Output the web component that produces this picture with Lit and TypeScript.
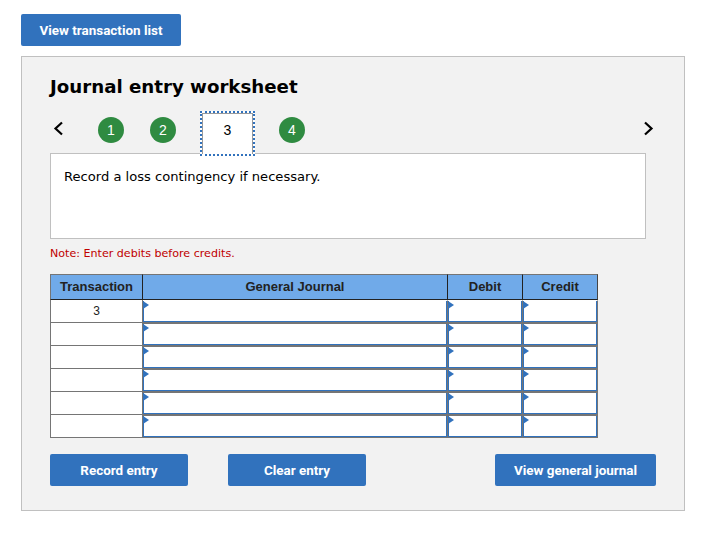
import {LitElement, html, css} from 'lit';
import {customElement} from 'lit/decorators.js';

const TABS = [1, 2, 3, 4];
const ROWS = ['3', '', '', '', '', ''];

@customElement('app-root')
export class AppRoot extends LitElement {
  static styles = css`
    :host {
      display: block;
      width: 701px;
      height: 543px;
      background: #fff;
      box-sizing: border-box;
      padding: 14px 16px 0 21px;
      font-family: 'DejaVu Sans', Verdana, sans-serif;
      color: #000;
    }

    .btn {
      display: flex;
      align-items: center;
      justify-content: center;
      height: 32px;
      border: 0;
      padding: 0;
      border-radius: 2px;
      background: #3172bd;
      color: #fff;
      font-family: Roboto, 'Liberation Sans', sans-serif;
      font-weight: 700;
      font-size: 13.45px;
    }

    .btn-list { width: 160px; margin-bottom: 10px; }
    .btn-action { width: 138px; }
    .btn-journal { width: 161px; margin-left: auto; }

    .panel {
      width: 664px;
      height: 455px;
      box-sizing: border-box;
      border: 1px solid #c0c0c0;
      background: #f2f2f2;
      padding: 17px 28px 0;
    }

    h2 {
      margin: 0 0 11px;
      font-size: 18.2px;
      line-height: 26px;
      font-weight: 700;
    }

    .tabs {
      position: relative;
      z-index: 1;
      display: flex;
      align-items: center;
      height: 45px;
      margin-bottom: -3px;
    }

    .arrow { width: 11px; height: 15px; display: block; }
    .prev { margin: 0 0 10px 3px; }
    .next { margin: 0 2px 10px auto; }

    .tab-list {
      display: flex;
      align-items: center;
      margin-left: 34px;
    }

    .step {
      width: 26px;
      height: 26px;
      margin: 0 26px 7px 0;
      border-radius: 50%;
      background: #2f8b41;
      color: #fff;
      display: flex;
      align-items: center;
      justify-content: center;
      font-family: 'Liberation Sans', Arial, sans-serif;
      font-size: 14px;
    }

    .step.current {
      width: 51px;
      height: 34px;
      padding-bottom: 7px;
      margin: 0 24px 0 0;
      border-radius: 0;
      border: 2px dotted #3172bd;
      background: #fff;
      color: #000;
      box-shadow: inset 1px 1px #9a9a9a, inset -1px 0 #9a9a9a;
    }

    .step:nth-child(2) { margin-right: 24px; }

    .desc {
      width: 596px;
      height: 86px;
      box-sizing: border-box;
      border: 1px solid #c0c0c0;
      background: #fff;
      padding: 14px 13px 0;
      font-size: 13.1px;
      line-height: 17px;
    }

    .note {
      margin: 7px 0 13px;
      color: #c00000;
      font-size: 11.1px;
      line-height: 15px;
    }

    .grid {
      display: grid;
      grid-template-columns: 93px 305px 75px 75px;
      width: 548px;
      box-sizing: border-box;
      font-family: 'Liberation Sans', Arial, sans-serif;
      font-size: 13px;
    }

    .head {
      height: 26px;
      box-sizing: border-box;
      padding-bottom: 2px;
      background: #70aae9;
      border-top: 1px solid #757575;
      border-right: 1px solid #222;
      border-bottom: 1px solid #222;
      color: #222;
      font-weight: 700;
      display: flex;
      align-items: center;
      justify-content: center;
    }

    .head:first-child { border-left: 1px solid #757575; }
    .head:nth-child(4) { border-right-color: #444; }

    .label {
      height: 23px;
      box-sizing: border-box;
      background: #fff;
      border-left: 1px solid #757575;
      border-right: 1px solid #757575;
      border-bottom: 1px solid #757575;
      display: flex;
      align-items: center;
      justify-content: center;
      color: #222;
      font-size: 12px;
    }

    .cell {
      position: relative;
      height: 23px;
      box-sizing: border-box;
      background: #fff;
      border-top: 1px solid #757575;
      border-right: 1px solid #757575;
      border-bottom: 1px solid #757575;
      box-shadow: inset 0 -1px #3172bd, inset 1px 0 #3172bd, inset -1px 0 #3172bd;
    }

    .cell.first { border-top-color: #fff; }

    .cell::before {
      content: '';
      position: absolute;
      left: 0;
      top: 0;
      border-left: 6px solid #3172bd;
      border-top: 4px solid transparent;
      border-bottom: 4px solid transparent;
    }

    .actions {
      display: flex;
      gap: 40px;
      margin-top: 16px;
    }
  `;

  render() {
    return html`
      <button class="btn btn-list">View transaction list</button>
      <div class="panel">
        <h2>Journal entry worksheet</h2>
        <div class="tabs">
          <svg class="arrow prev" viewBox="0 0 11 15">
            <path d="M9 1.5 L2.5 7.5 L9 13.5" fill="none" stroke="#000" stroke-width="2.2"/>
          </svg>
          <div class="tab-list">
            ${TABS.map(
              (n) => html`<div class="step ${n === 3 ? 'current' : ''}">${n}</div>`
            )}
          </div>
          <svg class="arrow next" viewBox="0 0 11 15">
            <path d="M2 1.5 L8.5 7.5 L2 13.5" fill="none" stroke="#000" stroke-width="2.2"/>
          </svg>
        </div>
        <div class="desc">Record a loss contingency if necessary.</div>
        <div class="note">Note: Enter debits before credits.</div>
        <div class="grid">
          <div class="head">Transaction</div>
          <div class="head">General Journal</div>
          <div class="head">Debit</div>
          <div class="head">Credit</div>
          ${ROWS.map(
            (r, i) => html`
              <div class="label">${r}</div>
              <div class="cell ${i === 0 ? 'first' : ''}"></div>
              <div class="cell ${i === 0 ? 'first' : ''}"></div>
              <div class="cell ${i === 0 ? 'first' : ''}"></div>
            `
          )}
        </div>
        <div class="actions">
          <button class="btn btn-action">Record entry</button>
          <button class="btn btn-action">Clear entry</button>
          <button class="btn btn-journal">View general journal</button>
        </div>
      </div>
    `;
  }
}
